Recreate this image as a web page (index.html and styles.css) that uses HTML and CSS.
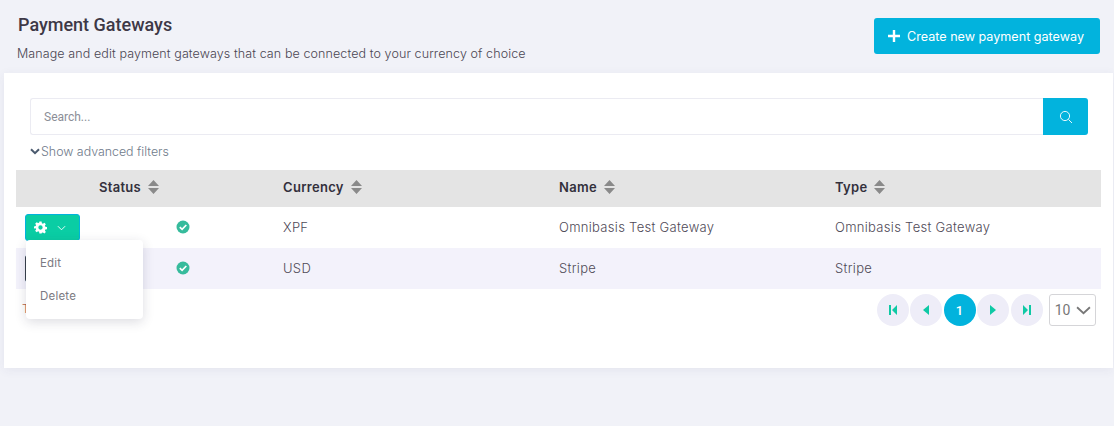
FILE: index.html
```html
<!DOCTYPE html>
<html lang="en">
<head>
<meta charset="utf-8">
<title>Payment Gateways</title>
<link rel="stylesheet" href="styles.css">
</head>
<body>
<header class="page-head">
  <div class="head-text">
    <h1 class="title">Payment Gateways</h1>
    <p class="subtitle">Manage and edit payment gateways that can be connected to your currency of choice</p>
  </div>
  <button class="create-btn" type="button">
    <svg class="plus" viewBox="0 0 12 12" width="12" height="12"><path d="M6 0v12M0 6h12" stroke="#fff" stroke-width="2.4" fill="none"/></svg>
    <span>Create new payment gateway</span>
  </button>
</header>
<main class="card">
  <div class="search-row">
    <input class="search-input" type="text" placeholder="Search...">
    <button class="search-btn" type="button" aria-label="Search">
      <svg viewBox="0 0 14 14" width="14" height="14"><circle cx="6" cy="6" r="4.6" fill="none" stroke="#fff" stroke-width="0.9"/><path d="M9.4 9.4l3.6 3.6" stroke="#fff" stroke-width="0.9" fill="none"/></svg>
    </button>
  </div>
  <div class="filters">
    <svg viewBox="0 0 10 7" width="10" height="7"><path d="M1 1.2l4 4 4-4" stroke="#4a5a6e" stroke-width="2" fill="none"/></svg>
    <span>Show advanced filters</span>
  </div>
  <div class="table">
    <div class="row head">
      <div class="c-act"></div>
      <div class="c-status"><span>Status</span><svg class="sort" viewBox="0 0 11 14" width="11" height="14"><path d="M5.5 0L11 6H0zM0 8h11l-5.500 6z" fill="#8a8a8a"/></svg></div>
      <div class="c-cur"><span>Currency</span><svg class="sort" viewBox="0 0 11 14" width="11" height="14"><path d="M5.5 0L11 6H0zM0 8h11l-5.500 6z" fill="#8a8a8a"/></svg></div>
      <div class="c-name"><span>Name</span><svg class="sort" viewBox="0 0 11 14" width="11" height="14"><path d="M5.5 0L11 6H0zM0 8h11l-5.500 6z" fill="#8a8a8a"/></svg></div>
      <div class="c-type"><span>Type</span><svg class="sort" viewBox="0 0 11 14" width="11" height="14"><path d="M5.5 0L11 6H0zM0 8h11l-5.500 6z" fill="#8a8a8a"/></svg></div>
    </div>
    <div class="row">
      <div class="c-act">
        <button class="gear-btn" type="button" aria-label="Actions">
          <svg viewBox="0 0 24 24" width="13" height="13"><path fill="#fff" fill-rule="evenodd" d="M10 1h4l.6 3.100 1.900.8 2.600-1.800 2.800 2.800-1.800 2.600.8 1.900 3.100.6v4l-3.100.6-.8 1.900 1.800 2.600-2.800 2.800-2.600-1.800-1.900.8L14 23h-4l-.6-3.100-1.900-.8-2.600 1.800-2.800-2.800 1.800-2.600-.8-1.900L0 14v-4l3.100-.6.8-1.900-1.800-2.600 2.800-2.800 2.600 1.800 1.900-.8zM12 8a4 4 0 1 0 0 8 4 4 0 0 0 0-8z"/></svg>
          <svg viewBox="0 0 10 6" width="9" height="6"><path d="M1 1l4 4 4-4" stroke="#fff" stroke-width="1" fill="none"/></svg>
        </button>
        <div class="menu">
          <div class="menu-item">Edit</div>
          <div class="menu-item">Delete</div>
        </div>
      </div>
      <div class="c-status"><svg class="check" viewBox="0 0 14 14" width="14" height="14"><circle cx="7" cy="7" r="6.500" fill="#36bb9c"/><path d="M3.800 7.200l2.300 2.200 4.200-4.400" stroke="#fff" stroke-width="1.700" fill="none"/></svg></div>
      <div class="c-cur">XPF</div>
      <div class="c-name">Omnibasis Test Gateway</div>
      <div class="c-type">Omnibasis Test Gateway</div>
    </div>
    <div class="row alt">
      <div class="c-act"><button class="gear-btn dark" type="button" aria-label="Actions"></button></div>
      <div class="c-status"><svg class="check" viewBox="0 0 14 14" width="14" height="14"><circle cx="7" cy="7" r="6.500" fill="#36bb9c"/><path d="M3.800 7.200l2.300 2.200 4.200-4.400" stroke="#fff" stroke-width="1.700" fill="none"/></svg></div>
      <div class="c-cur">USD</div>
      <div class="c-name">Stripe</div>
      <div class="c-type">Stripe</div>
    </div>
  </div>
  <div class="foot">
    <div class="total">Total</div>
    <nav class="pager">
      <span class="pg"><svg viewBox="0 0 8 10" width="8" height="10"><path d="M0 0h2v10H0zM8 0v10L3 5z" fill="#0fc9a5"/></svg></span>
      <span class="pg"><svg viewBox="0 0 6 10" width="6" height="10"><path d="M6 0v10L0 5z" fill="#0fc9a5"/></svg></span>
      <span class="pg on">1</span>
      <span class="pg"><svg viewBox="0 0 6 10" width="6" height="10"><path d="M0 0v10l6-5z" fill="#0fc9a5"/></svg></span>
      <span class="pg"><svg viewBox="0 0 8 10" width="8" height="10"><path d="M6 0h2v10H6zM0 0v10l5-5z" fill="#0fc9a5"/></svg></span>
      <div class="size"><span>10</span><svg viewBox="0 0 14 8" width="15" height="9"><path d="M1 1l6 5.500L13 1" stroke="#777" stroke-width="1.700" fill="none"/></svg></div>
    </nav>
  </div>
</main>
</body>
</html>
```
FILE: styles.css
```css
* { box-sizing: border-box; }
html, body { height: 100%; }
body {
  margin: 0;
  background: #f1f2f8;
  font-family: Inter, "Open Sans", sans-serif;
  font-weight: 300;
  color: #3f3a4a;
  overflow: hidden;
}
button { font-family: inherit; border: 0; padding: 0; cursor: pointer; }
.page-head {
  height: 73px;
  display: flex;
  justify-content: space-between;
  padding: 14px 14px 0 18px;
}
.title {
  margin: 0;
  font: 500 18px/22px Roboto, sans-serif;
  color: #3d3846;
}
.subtitle {
  margin: 9px 0 0 -1px;
  font-size: 12.500px;
  line-height: 17px;
  letter-spacing: .1px;
  color: #4a4552;
}
.create-btn {
  margin-top: 4px;
  width: 226px;
  height: 36px;
  background: #02b3dd;
  border-radius: 3px;
  color: #fff;
  font-size: 12.600px;
  font-weight: 400;
  display: flex;
  align-items: center;
  justify-content: center;
  gap: 7px;
  padding-right: 2px;
}
.card {
  margin-left: 4px;
  width: 1109px;
  height: 295px;
  background: #fff;
  box-shadow: 0 2px 10px rgba(60, 60, 110, .07);
  padding: 25px 12px 0;
}
.search-row { display: flex; margin: 0 13px 0 14px; height: 37px; }
.search-input {
  flex: 1;
  border: 1px solid #ebebf2;
  border-right: 0;
  border-radius: 3px 0 0 3px;
  padding: 0 13px;
  font: 400 12px Roboto, sans-serif;
  outline: none;
}
.search-input::placeholder { color: #8b8e97; opacity: 1; }
.search-btn {
  width: 45px;
  background: #02b3dd;
  border-radius: 0 3px 3px 0;
  display: flex;
  align-items: center;
  justify-content: center;
}
.filters {
  height: 35px;
  margin-left: 14px;
  padding-top: 8px;
  display: flex;
  align-items: flex-start;
  gap: 1px;
  font-size: 12.400px;
  line-height: 18px;
  color: #6f7a8a;
}
.filters svg { margin-top: 5px; }
.table { width: 1085px; }
.row {
  display: grid;
  grid-template-columns: 83px 184px 276px 276px 1fr;
  align-items: center;
  height: 41px;
  padding-bottom: 2px;
  font-size: 13px;
  letter-spacing: .3px;
  color: #4f4a57;
}
.row.alt { background: #f3f2fb; }
.row.head {
  height: 37px;
  padding-bottom: 4px;
  background: #e4e4e4;
  font-weight: 600;
  color: #33303c;
}
.head > div { display: flex; align-items: center; gap: 7px; }
.c-act { position: relative; padding-left: 9px; }
.row:not(.head) .c-status { padding-left: 77px; display: flex; }
.gear-btn {
  width: 55px;
  height: 27px;
  margin-top: 2px;
  background: #0acda4;
  border: 1px solid #02b3dd;
  border-radius: 3px;
  display: flex;
  align-items: center;
  justify-content: center;
  gap: 10px;
  padding-right: 5px;
}
.gear-btn.dark { background: #02b3dd; border-left-color: #38404a; }
.menu {
  position: absolute;
  left: 10px;
  top: 28px;
  width: 117px;
  height: 79px;
  padding: 6px 0;
  background: #fff;
  border-radius: 4px;
  box-shadow: 0 3px 12px rgba(40, 40, 70, .16);
  z-index: 2;
}
.menu-item {
  height: 33px;
  padding-left: 14px;
  display: flex;
  align-items: center;
  font: 400 11.500px Inter, sans-serif;
  letter-spacing: .2px;
  color: #7b7a82;
}
.foot {
  display: flex;
  justify-content: space-between;
  width: 1080px;
  padding-top: 5px;
}
.total { font-size: 12px; color: #b5654a; margin: 7px 0 0 6px; }
.pager { display: flex; align-items: center; gap: 1.500px; height: 32px; }
.pg {
  width: 32px;
  height: 32px;
  border-radius: 50%;
  background: #eeedf8;
  display: flex;
  align-items: center;
  justify-content: center;
}
.pg.on {
  background: #02b3dd;
  color: #fff;
  font: 500 13px Roboto, sans-serif;
}
.size {
  margin-left: 5px;
  width: 47px;
  height: 32px;
  border: 1px solid #d5d5d8;
  border-radius: 3px;
  display: flex;
  align-items: center;
  justify-content: center;
  gap: 6px;
  padding-left: 1px;
  font: 400 14px Roboto, sans-serif;
  color: #777;
}
```
